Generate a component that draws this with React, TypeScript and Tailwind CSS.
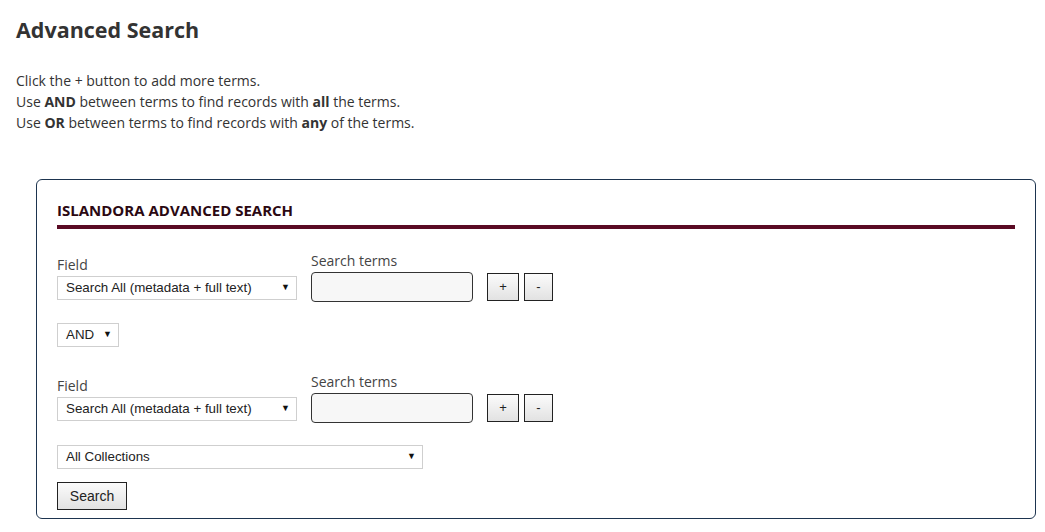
import React from 'react';

const sans = "font-['Open_Sans','DejaVu_Sans',sans-serif]";
const arial = "font-['Liberation_Sans',Arial,sans-serif]";

function FakeSelect({ label, width }: { label: string; width: string }) {
  return (
    <div
      className={`${width} h-[24px] flex items-center justify-between pl-[8px] pr-[6px] border border-[#cfcfcf] bg-white text-[13.33px] text-[#222] ${arial}`}
    >
      <span>{label}</span>
      <span className="text-[9px] text-[#111]">▼</span>
    </div>
  );
}

function TermRow() {
  return (
    <div className="flex items-end">
      <div className="flex flex-col mb-[2px]">
        <label className={`text-[14px] leading-[18px] text-[#444] ${sans}`}>Field</label>
        <div className="mt-[2px]">
          <FakeSelect label="Search All (metadata + full text)" width="w-[240px]" />
        </div>
      </div>
      <div className="flex flex-col ml-[14px]">
        <label className={`text-[14px] leading-[18px] text-[#444] ${sans}`}>Search terms</label>
        <input
          type="text"
          className="mt-[2px] w-[162px] h-[30px] border border-[#333] rounded-[4px] bg-[#f7f7f7]"
        />
      </div>
      <button
        className={`ml-[14px] mb-[1px] w-[32px] h-[28px] border border-[#222] bg-gradient-to-b from-[#fbfbfb] to-[#e2e2e2] text-[13px] text-[#222] ${arial}`}
      >
        +
      </button>
      <button
        className={`ml-[5px] mb-[1px] w-[29px] h-[28px] border border-[#222] bg-gradient-to-b from-[#fbfbfb] to-[#e2e2e2] text-[13px] text-[#222] ${arial}`}
      >
        -
      </button>
    </div>
  );
}

export default function App() {
  return (
    <div className={`w-[1045px] h-[532px] bg-white pl-[16px] overflow-hidden ${sans}`}>
      <h1 className="pt-[15px] text-[21.5px] leading-[30px] font-bold text-[#333]">Advanced Search</h1>
      <div className="mt-[25px] text-[14px] leading-[21px] text-[#333]">
        <p>Click the + button to add more terms.</p>
        <p>
          Use <b>AND</b> between terms to find records with <b>all</b> the terms.
        </p>
        <p>
          Use <b>OR</b> between terms to find records with <b>any</b> of the terms.
        </p>
      </div>

      <div className="ml-[20px] mt-[46px] w-[1000px] border border-[#1d344f] rounded-[6px] px-[20px] pt-[20px] pb-[8px]">
        <h2 className="text-[15px] leading-[20px] font-bold text-[#2b0812] uppercase pb-[5px] border-b-4 border-[#5a0a24]">
          Islandora Advanced Search
        </h2>

        <div className="mt-[23px]">
          <TermRow />
        </div>

        <div className="mt-[21px]">
          <FakeSelect label="AND" width="w-[62px]" />
        </div>

        <div className="mt-[26px]">
          <TermRow />
        </div>

        <div className="mt-[22px]">
          <FakeSelect label="All Collections" width="w-[366px]" />
        </div>

        <button
          className={`mt-[13px] w-[70px] h-[28px] border border-[#222] bg-gradient-to-b from-[#fbfbfb] to-[#e2e2e2] text-[14px] text-[#222] ${arial}`}
        >
          Search
        </button>
      </div>
    </div>
  );
}
